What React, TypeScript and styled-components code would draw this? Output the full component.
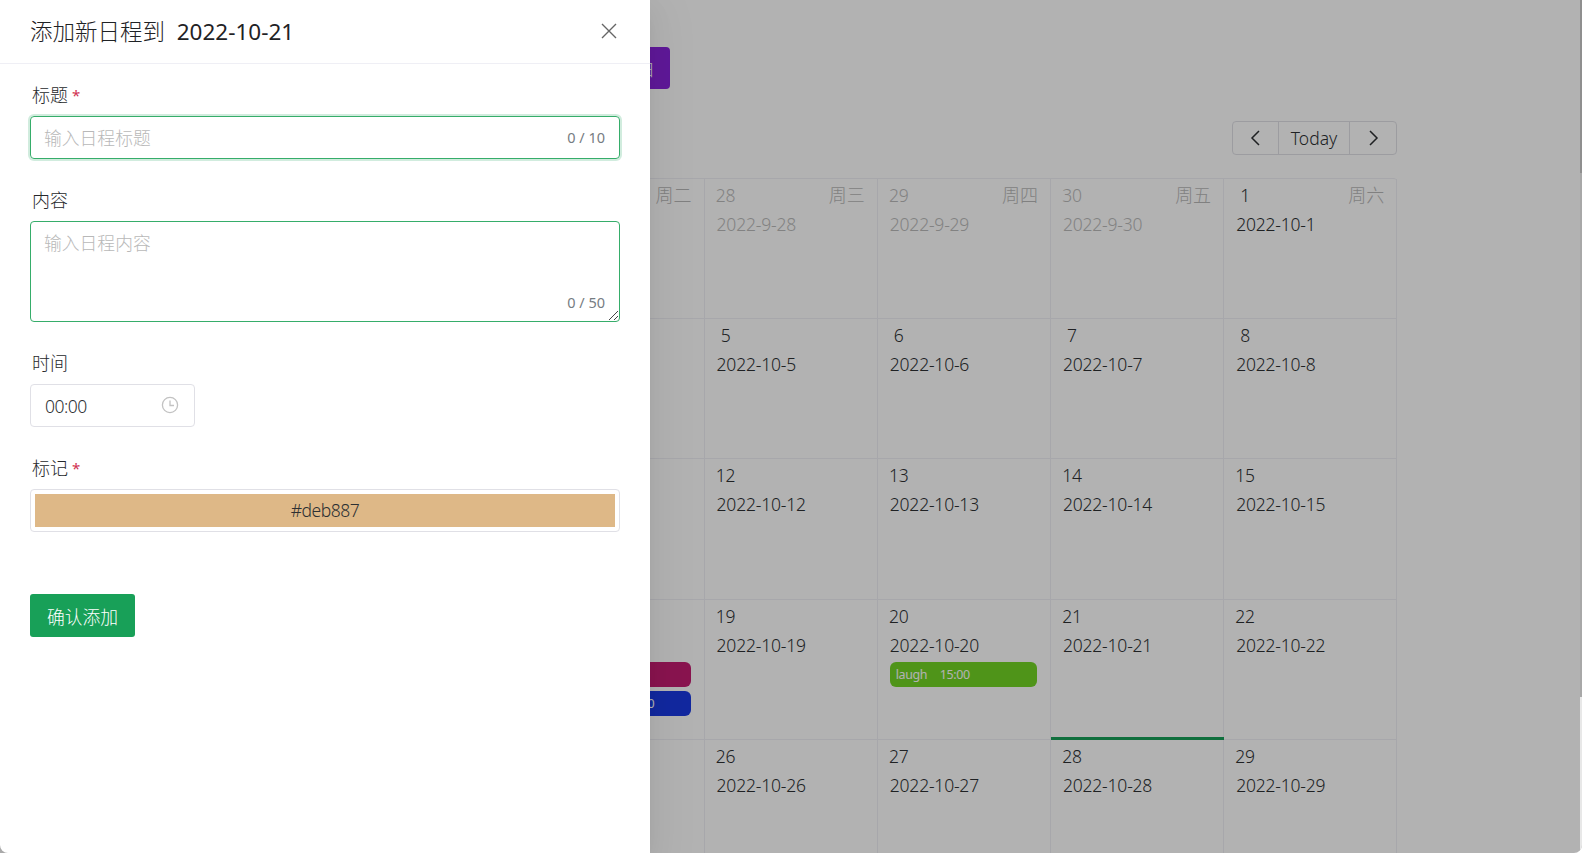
import React from "react";
import styled, { createGlobalStyle } from "styled-components";

const Global = createGlobalStyle`
  html, body { margin: 0; padding: 0; background: #fff; height: 853px; overflow: hidden; }
  body { font-family: "Noto Sans", "Noto Sans CJK SC", sans-serif; font-size: 17.5px; font-weight: 300; color: #2d3033; }
  * { box-sizing: border-box; }
`;

const Viewport = styled.div`
  position: relative;
  width: 1582px;
  height: 853px;
  overflow: hidden;
  background: #fff;
  border-bottom-right-radius: 8px;
`;
const Page = styled.main`
  width: 1214px;
  margin: 0 auto;
  padding-top: 47px;
`;
const TopRow = styled.div`
  display: flex;
  padding-left: 380px;
`;
const AddButton = styled.button`
  width: 106px;
  height: 42px;
  border: 0;
  border-radius: 4px;
  background: #8825da;
  color: #fff;
  font: inherit;
  padding: 0 15px 0 21px;
  white-space: nowrap;
`;
const CalendarHead = styled.div`
  display: flex;
  justify-content: space-between;
  align-items: center;
  height: 34px;
  margin-top: 32px;
  margin-bottom: 23px;
  padding-right: 1px;
`;
const MonthTitle = styled.div`
  font-size: 22px;
`;
const NavGroup = styled.div`
  display: flex;
  height: 34px;
  border: 1px solid #e0e0e6;
  border-radius: 4px;
`;
const NavButton = styled.div<{ $w: number }>`
  width: ${(p) => p.$w}px;
  display: flex;
  align-items: center;
  justify-content: center;
  color: #2d3033;
  & + & { border-left: 1px solid #e0e0e6; }
`;
const Grid = styled.div`
  display: grid;
  grid-template-columns: repeat(7, 173.2px);
  grid-auto-rows: 140.2px;
  width: 1213.4px;
  border-top: 1px solid #efeff5;
  border-left: 1px solid #efeff5;
  border-top-right-radius: 4px;
  letter-spacing: -0.2px;
`;
const Cell = styled.div`
  position: relative;
  padding: 4px 13px 0 12px;
  border-right: 1px solid #efeff5;
  border-bottom: 1px solid #efeff5;
`;
const DayRow = styled.div`
  display: flex;
  justify-content: space-between;
  height: 25px;
  line-height: 24px;
  margin-right: -1px;
`;
const DayNum = styled.span<{ $muted: boolean }>`
  width: 20px;
  margin-left: -1px;
  text-align: center;
  color: ${(p) => (p.$muted ? "#bbbbbb" : "#2d3033")};
`;
const Weekday = styled.span`
  color: #b8b8b8;
  font-size: 18px;
  letter-spacing: 0;
`;
const FullDate = styled.div<{ $muted: boolean }>`
  height: 33px;
  line-height: 32px;
  color: ${(p) => (p.$muted ? "#bbbbbb" : "#2d3033")};
`;
const EventPill = styled.div<{ $bg: string }>`
  display: flex;
  align-items: center;
  height: 25px;
  margin-bottom: 4px;
  padding: 0 6px;
  border-radius: 6px;
  background: ${(p) => p.$bg};
  color: #fff;
  font-size: 12.5px;
  font-weight: 400;
  letter-spacing: -0.4px;
  white-space: nowrap;
`;
const EventName = styled.span<{ $w: number }>`
  width: ${(p) => p.$w}px;
`;
const CurrentBar = styled.div`
  position: absolute;
  left: 0;
  right: -1px;
  bottom: -1px;
  height: 3px;
  background: #18a058;
`;
const Mask = styled.div`
  position: absolute;
  inset: 0;
  background: rgba(0, 0, 0, 0.3);
`;
const ScrollStrip = styled.div`
  position: absolute;
  top: 0;
  right: 0;
  width: 2px;
  height: 853px;
  display: flex;
  flex-direction: column;
  background: #e8e8e8;
`;
const ScrollPart = styled.div<{ $h: number; $c: string }>`
  height: ${(p) => p.$h}px;
  background: ${(p) => p.$c};
`;
const Drawer = styled.aside`
  position: absolute;
  top: 0;
  bottom: 0;
  left: 0;
  width: 650px;
  background: #fff;
  border-bottom-left-radius: 8px;
  box-shadow: 0 6px 16px -9px rgba(0, 0, 0, 0.08), 0 9px 28px 0 rgba(0, 0, 0, 0.05), 0 12px 48px 16px rgba(0, 0, 0, 0.03);
`;
const DrawerHeader = styled.header`
  display: flex;
  align-items: center;
  justify-content: space-between;
  height: 64px;
  padding: 0 32px 2px 30px;
  border-bottom: 1px solid #efeff5;
  color: #1f2225;
  font-size: 22.5px;
`;
const HeaderDate = styled.span`
  font-weight: 400;
  font-size: 22.5px;
`;
const CloseIcon = styled.svg`
  display: block;
  width: 18px;
  height: 18px;
  color: #666;
`;
const Form = styled.form`
  padding: 18px 30px 0;
`;
const Field = styled.div`
  margin-bottom: 28px;
`;
const Label = styled.label`
  display: block;
  height: 34px;
  padding-left: 2px;
  font-size: 18px;
  line-height: 27px;
  color: #26282b;
`;
const Star = styled.span`
  margin-left: 4px;
  font-size: 15px;
  font-weight: 400;
  vertical-align: 1px;
  color: #d03050;
`;
const InputBox = styled.div`
  display: flex;
  align-items: center;
  justify-content: space-between;
  height: 43px;
  padding: 0 14px 2px;
  border: 1px solid #36ad6a;
  border-radius: 4px;
  box-shadow: 0 0 0 2px rgba(24, 160, 88, 0.2);
`;
const Placeholder = styled.span`
  margin-left: -1px;
  color: #b8b8b8;
  font-size: 17.8px;
`;
const Counter = styled.span`
  color: #767c82;
  font-size: 14.5px;
  font-weight: 400;
`;
const AreaBox = styled.div`
  position: relative;
  height: 101px;
  padding: 7px 14px;
  border: 1px solid #36ad6a;
  border-radius: 4px;
  line-height: 28px;
`;
const AreaCounter = styled(Counter)`
  position: absolute;
  right: 14px;
  bottom: 7px;
  line-height: 24px;
`;
const Grip = styled.svg`
  position: absolute;
  right: 0;
  bottom: 0;
  width: 11px;
  height: 11px;
  color: #444;
`;
const TimeBox = styled.div`
  display: flex;
  align-items: center;
  justify-content: space-between;
  width: 165px;
  height: 43px;
  padding: 0 15px 0 14px;
  border: 1px solid #e0e0e6;
  border-radius: 4px;
  letter-spacing: -0.5px;
`;
const ClockIcon = styled.svg`
  display: block;
  width: 18px;
  height: 18px;
  margin-top: -1px;
  color: #c2c2c2;
`;
const ColorBox = styled.div`
  height: 43px;
  padding: 4px;
  border: 1px solid #e0e0e6;
  border-radius: 4px;
`;
const ColorFill = styled.div`
  display: flex;
  align-items: center;
  justify-content: center;
  height: 33px;
  padding-bottom: 2px;
  background: #deb887;
  color: #2d3033;
  letter-spacing: -0.5px;
`;
const Submit = styled.button`
  display: block;
  width: 105px;
  height: 43px;
  margin-top: 62px;
  padding: 0;
  border: 0;
  border-radius: 3px;
  background: #18a058;
  color: #fff;
  font: inherit;
  font-size: 17.8px;
`;

type Ev = { name: string; time: string; bg: string; w: number };
const events: Record<string, Ev[]> = {
  "2022-10-18": [
    { name: "study", time: "09:00", bg: "#c51d71", w: 44 },
    { name: "meeting", time: "16:00", bg: "#1a3ae4", w: 75 },
  ],
  "2022-10-20": [{ name: "laugh", time: "15:00", bg: "#72d525", w: 44 }],
};
const weekdays = ["周日", "周一", "周二", "周三", "周四", "周五", "周六"];

function buildDays() {
  const days: { day: number; full: string; muted: boolean }[] = [];
  for (let d = 25; d <= 30; d++) days.push({ day: d, full: `2022-9-${d}`, muted: true });
  for (let d = 1; d <= 29; d++) days.push({ day: d, full: `2022-10-${d}`, muted: false });
  return days;
}

const Chevron = ({ flip }: { flip?: boolean }) => (
  <svg width="16" height="18" viewBox="0 0 16 18" fill="none" stroke="currentColor" strokeWidth="1.5">
    <path d={flip ? "M5 2l7 7-7 7" : "M11 2L4 9l7 7"} />
  </svg>
);

export default function App() {
  return (
    <Viewport>
      <Global />
      <Page>
        <TopRow>
          <AddButton type="button">查看今日</AddButton>
        </TopRow>
        <CalendarHead>
          <MonthTitle>2022 年 10 月</MonthTitle>
          <NavGroup>
            <NavButton $w={45}>
              <Chevron />
            </NavButton>
            <NavButton $w={71}>Today</NavButton>
            <NavButton $w={47}>
              <Chevron flip />
            </NavButton>
          </NavGroup>
        </CalendarHead>
        <Grid>
          {buildDays().map((d, i) => (
            <Cell key={d.full}>
              <DayRow>
                <DayNum $muted={d.muted}>{d.day}</DayNum>
                {i < 7 && <Weekday>{weekdays[i]}</Weekday>}
              </DayRow>
              <FullDate $muted={d.muted}>{d.full}</FullDate>
              {(events[d.full] ?? []).map((e) => (
                <EventPill key={e.name} $bg={e.bg}>
                  <EventName $w={e.w}>{e.name}</EventName>
                  {e.time}
                </EventPill>
              ))}
              {d.full === "2022-10-21" && <CurrentBar />}
            </Cell>
          ))}
        </Grid>
      </Page>
      <Mask />
      <ScrollStrip>
        <ScrollPart $h={173} $c="#8f8f8f" />
        <ScrollPart $h={524} $c="#a8a8a8" />
      </ScrollStrip>
      <Drawer>
        <DrawerHeader>
          <span>
            添加新日程到&nbsp;&nbsp;<HeaderDate>2022-10-21</HeaderDate>
          </span>
          <CloseIcon viewBox="0 0 18 18" fill="none" stroke="currentColor" strokeWidth="1.4">
            <path d="M2 2l14 14M16 2L2 16" />
          </CloseIcon>
        </DrawerHeader>
        <Form>
          <Field>
            <Label>
              标题<Star>*</Star>
            </Label>
            <InputBox>
              <Placeholder>输入日程标题</Placeholder>
              <Counter>0 / 10</Counter>
            </InputBox>
          </Field>
          <Field>
            <Label>内容</Label>
            <AreaBox>
              <Placeholder>输入日程内容</Placeholder>
              <AreaCounter>0 / 50</AreaCounter>
              <Grip viewBox="0 0 11 11" fill="none" stroke="currentColor" strokeWidth="1">
                <path d="M1 10l9-9M6 10l4-4" />
              </Grip>
            </AreaBox>
          </Field>
          <Field>
            <Label>时间</Label>
            <TimeBox>
              <span>00:00</span>
              <ClockIcon viewBox="0 0 18 18" fill="none" stroke="currentColor" strokeWidth="1.3">
                <circle cx="9" cy="9" r="7.6" />
                <path d="M9 4.5V9.5H13" />
              </ClockIcon>
            </TimeBox>
          </Field>
          <Field>
            <Label>
              标记<Star>*</Star>
            </Label>
            <ColorBox>
              <ColorFill>#deb887</ColorFill>
            </ColorBox>
          </Field>
          <Submit type="button">确认添加</Submit>
        </Form>
      </Drawer>
    </Viewport>
  );
}
